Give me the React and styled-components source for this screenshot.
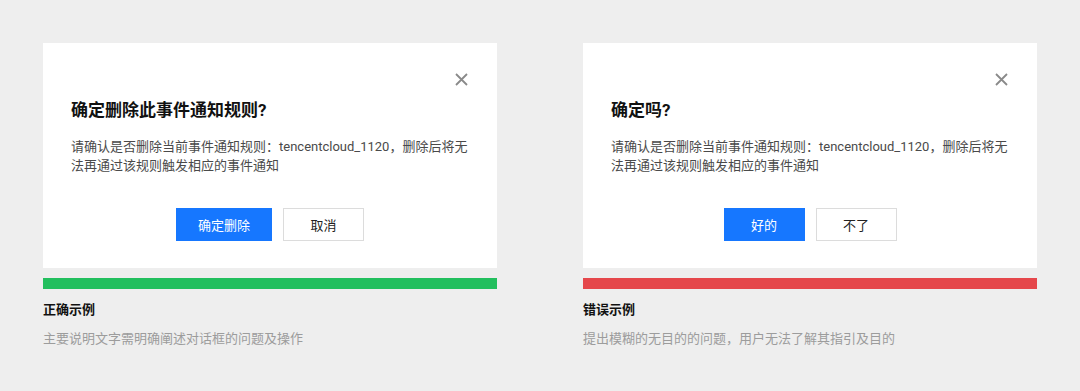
import React from 'react';
import styled, { createGlobalStyle } from 'styled-components';

const GlobalStyle = createGlobalStyle`
  html, body {
    margin: 0;
    padding: 0;
    background: #eeeeee;
  }
  body {
    font-family: Roboto, "Noto Sans CJK SC", sans-serif;
    -webkit-font-smoothing: antialiased;
  }
`;

const Page = styled.div`
  width: 1080px;
  height: 391px;
  box-sizing: border-box;
  padding: 43px 43px 0;
  display: grid;
  grid-template-columns: 454px 454px;
  justify-content: space-between;
  background: #eeeeee;
`;

const Column = styled.section`
  display: flex;
  flex-direction: column;
`;

const Card = styled.div`
  background: #fff;
  height: 225px;
  box-sizing: border-box;
  padding: 28px 28px 0;
  display: flex;
  flex-direction: column;
`;

const CloseRow = styled.div`
  display: flex;
  justify-content: flex-end;
`;

const CloseButton = styled.button`
  width: 16px;
  height: 16px;
  padding: 0;
  border: none;
  background: none;
  display: flex;
  align-items: center;
  justify-content: center;
  cursor: pointer;
`;

const Title = styled.h2`
  margin: 11px 0 0;
  font-size: 17px;
  line-height: 24px;
  font-weight: 700;
  color: #111;
`;

const Body = styled.p`
  margin: 15px -8px 0 0;
  font-size: 13px;
  line-height: 19px;
  color: #4a4a4a;
`;

const Actions = styled.div`
  margin-top: 33px;
  display: flex;
  justify-content: center;
  gap: 11px;
`;

const Button = styled.button`
  height: 33px;
  min-width: 81px;
  padding: 0 21px;
  box-sizing: border-box;
  font-family: inherit;
  font-size: 13px;
  cursor: pointer;
  border: 1px solid ${(p) => (p.$primary ? '#1677ff' : '#dcdcdc')};
  background: ${(p) => (p.$primary ? '#1677ff' : '#fff')};
  color: ${(p) => (p.$primary ? '#fff' : '#222')};
`;

const Bar = styled.div`
  margin-top: 10px;
  height: 11px;
  background: ${(p) => p.$color};
`;

const Label = styled.div`
  margin-top: 11px;
  font-size: 13px;
  line-height: 20px;
  font-weight: 700;
  color: #111;
`;

const Note = styled.div`
  margin-top: 9px;
  font-size: 13px;
  line-height: 20px;
  color: #9c9c9c;
`;

const CloseIcon = () => (
  <svg width="13" height="13" viewBox="0 0 13 13">
    <path d="M1 1 L12 12 M12 1 L1 12" stroke="#8a8a8a" strokeWidth="1.8" fill="none" />
  </svg>
);

const body =
  '请确认是否删除当前事件通知规则：tencentcloud_1120，删除后将无法再通过该规则触发相应的事件通知';

const examples = [
  {
    title: '确定删除此事件通知规则?',
    ok: '确定删除',
    cancel: '取消',
    color: '#22bf5e',
    label: '正确示例',
    note: '主要说明文字需明确阐述对话框的问题及操作',
  },
  {
    title: '确定吗?',
    ok: '好的',
    cancel: '不了',
    color: '#e5474b',
    label: '错误示例',
    note: '提出模糊的无目的的问题，用户无法了解其指引及目的',
  },
];

export default function App() {
  return (
    <>
      <GlobalStyle />
      <Page>
        {examples.map((ex) => (
          <Column key={ex.label}>
            <Card>
              <CloseRow>
                <CloseButton aria-label="关闭">
                  <CloseIcon />
                </CloseButton>
              </CloseRow>
              <Title>{ex.title}</Title>
              <Body>{body}</Body>
              <Actions>
                <Button $primary>{ex.ok}</Button>
                <Button>{ex.cancel}</Button>
              </Actions>
            </Card>
            <Bar $color={ex.color} />
            <Label>{ex.label}</Label>
            <Note>{ex.note}</Note>
          </Column>
        ))}
      </Page>
    </>
  );
}
